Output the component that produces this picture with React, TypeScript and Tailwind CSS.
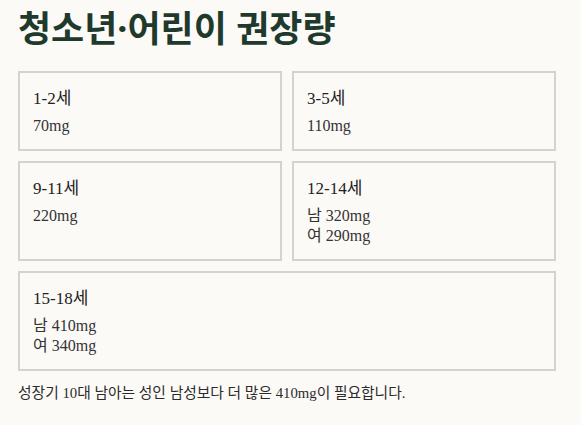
export default function App() {
  const font = { fontFamily: '"Liberation Serif", "Noto Sans CJK KR", serif' };
  const items = [
    { age: "1-2세", lines: ["70mg"] },
    { age: "3-5세", lines: ["110mg"] },
    { age: "9-11세", lines: ["220mg"] },
    { age: "12-14세", lines: ["남 320mg", "여 290mg"] },
  ];
  return (
    <div className="min-h-[425px] w-[581px] bg-[#fcfaf7] px-[18px] pt-[5px] text-[#2b2b2b]" style={font}>
      <h1
        className="text-[36px] font-bold leading-[48px] text-[#1f3a2d]"
        style={{ fontFamily: '"Noto Sans", "Noto Sans CJK KR", sans-serif' }}
      >
        청소년·어린이 권장량
      </h1>
      <div className="mt-[18px] grid w-[538px] grid-cols-2 gap-[10px]">
        {items.map((it) => (
          <Card key={it.age} age={it.age} lines={it.lines} />
        ))}
        <div className="col-span-2">
          <Card age="15-18세" lines={["남 410mg", "여 340mg"]} />
        </div>
      </div>
      <p className="mt-[11px] text-[14.75px] leading-[22px]">
        성장기 10대 남아는 성인 남성보다 더 많은 410mg이 필요합니다.
      </p>
    </div>
  );
}

function Card({ age, lines }: { age: string; lines: string[] }) {
  return (
    <div className="h-full border-2 border-[#d5d3cc] px-[13px] pt-[13px] pb-[13px]">
      <div className="text-[17px] leading-[26px] text-[#222]">{age}</div>
      <div className="mt-[4px] text-[16px] leading-[20px] text-[#333]">
        {lines.map((l) => (
          <div key={l}>{l}</div>
        ))}
      </div>
    </div>
  );
}
